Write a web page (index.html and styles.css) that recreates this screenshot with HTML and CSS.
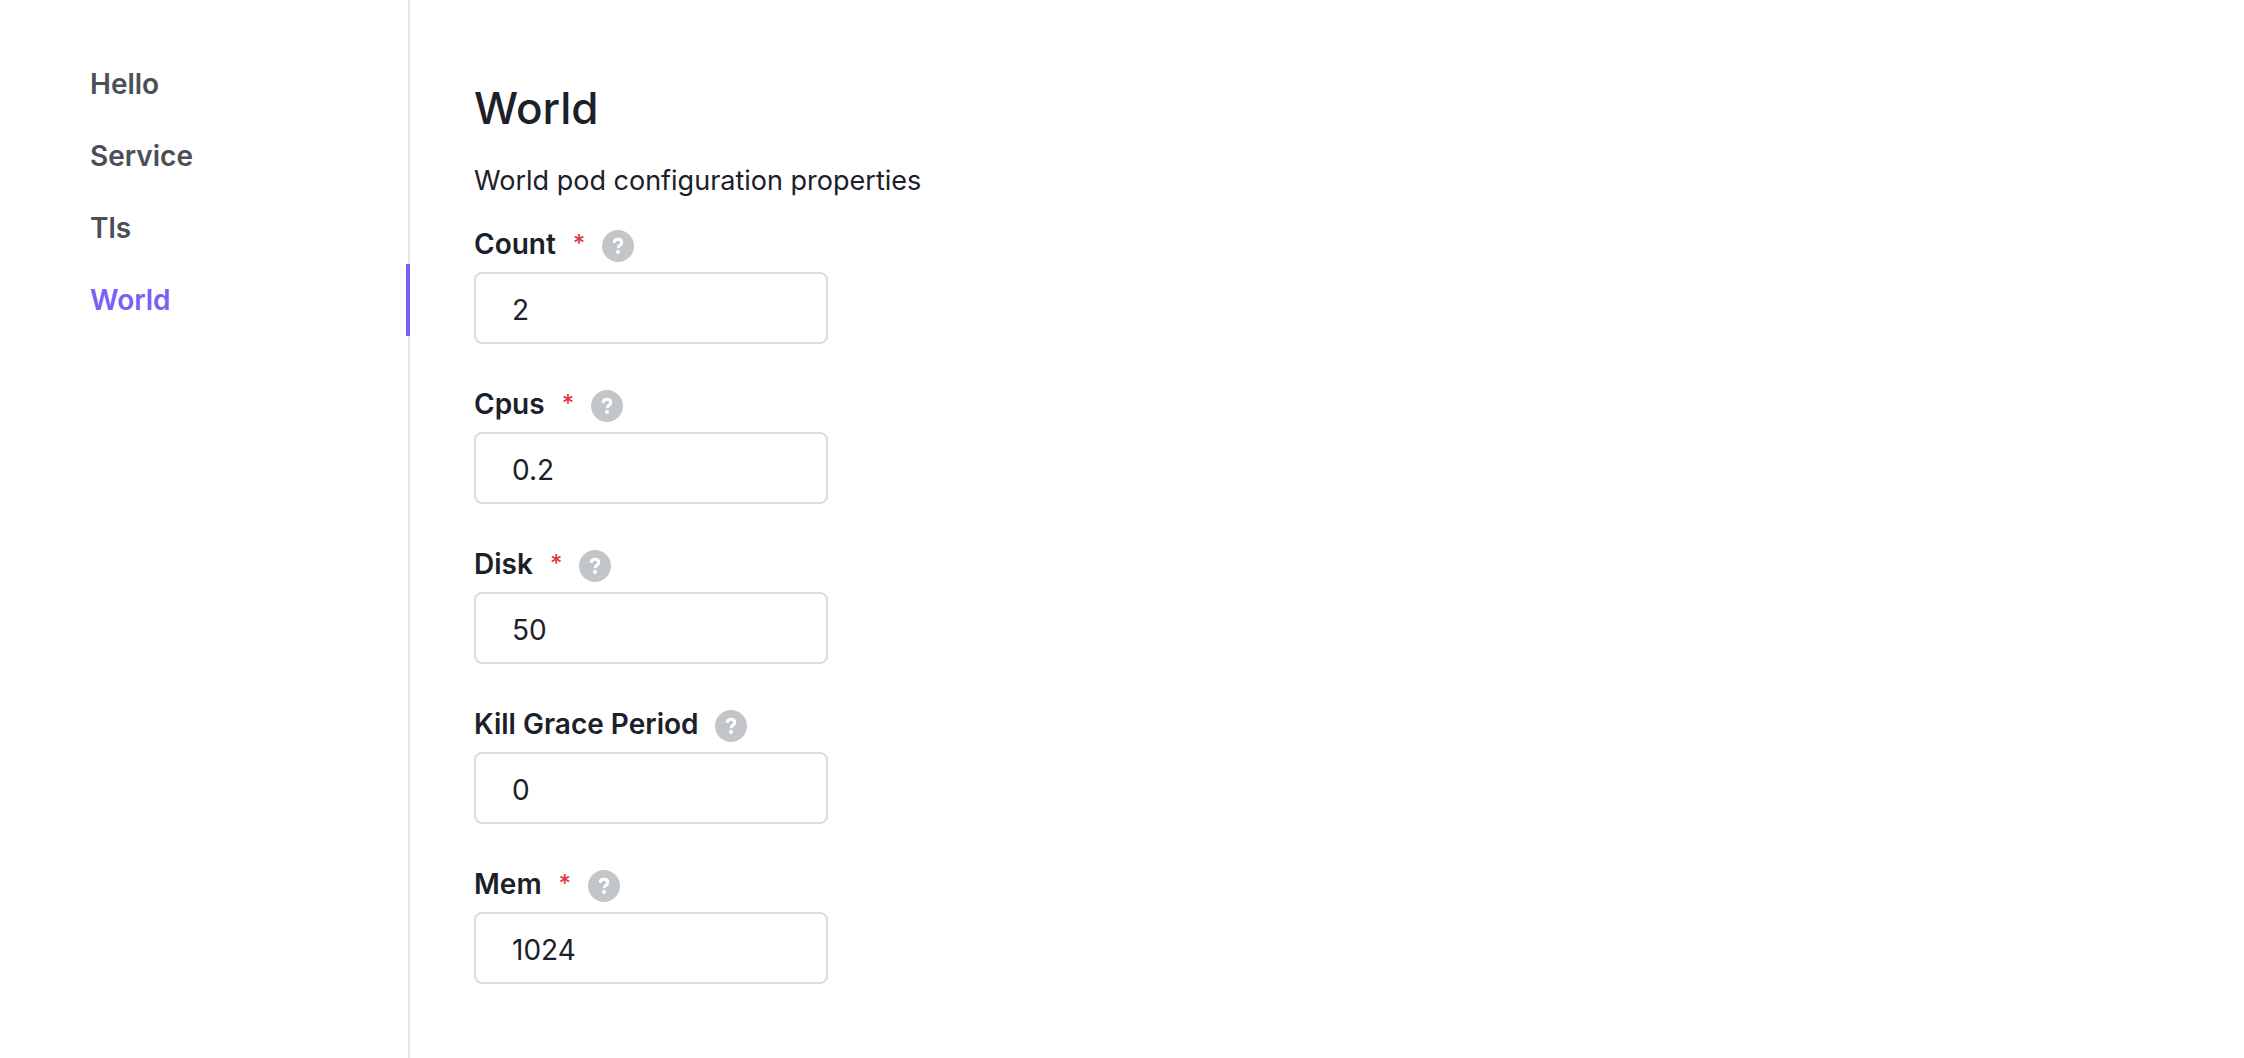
FILE: index.html
```html
<!DOCTYPE html>
<html lang="en">
<head>
<meta charset="utf-8">
<meta name="viewport" content="width=device-width, initial-scale=1">
<title>World</title>
<link rel="stylesheet" href="styles.css">
</head>
<body>
<svg class="sprite" aria-hidden="true">
  <symbol id="help-icon" viewBox="0 0 32 32">
    <circle cx="16" cy="16" r="16" fill="#c3c6c9"/>
    <path d="M12 12.800C12.200 10.400 13.800 9.300 16 9.300c2.200 0 3.800 1.200 3.800 3.100 0 1.400-.8 2.200-1.900 2.900-1.200.7-1.700 1.300-1.700 2.900" fill="none" stroke="#fff" stroke-width="2.900"/>
    <circle cx="16" cy="22" r="2.100" fill="#fff"/>
  </symbol>
</svg>
<div class="layout">
  <nav class="sidebar" aria-label="Sections">
    <a class="tab" href="#hello">Hello</a>
    <a class="tab" href="#service">Service</a>
    <a class="tab" href="#tls">Tls</a>
    <a class="tab tab-active" href="#world" aria-current="page">World</a>
  </nav>
  <main class="content">
    <h1 class="title">World</h1>
    <p class="description">World pod configuration properties</p>
    <form class="form">
      <div class="field">
        <div class="field-head">
          <label class="label" for="count">Count</label>
          <span class="required">*</span>
          <button class="help" type="button" aria-label="Help"><svg class="help-icon"><use href="#help-icon"/></svg></button>
        </div>
        <input class="input" id="count" type="text" value="2" required>
      </div>
      <div class="field">
        <div class="field-head">
          <label class="label" for="cpus">Cpus</label>
          <span class="required">*</span>
          <button class="help" type="button" aria-label="Help"><svg class="help-icon"><use href="#help-icon"/></svg></button>
        </div>
        <input class="input" id="cpus" type="text" value="0.2" required>
      </div>
      <div class="field">
        <div class="field-head">
          <label class="label" for="disk">Disk</label>
          <span class="required">*</span>
          <button class="help" type="button" aria-label="Help"><svg class="help-icon"><use href="#help-icon"/></svg></button>
        </div>
        <input class="input" id="disk" type="text" value="50" required>
      </div>
      <div class="field">
        <div class="field-head">
          <label class="label" for="kill">Kill Grace Period</label>
          <button class="help" type="button" aria-label="Help"><svg class="help-icon"><use href="#help-icon"/></svg></button>
        </div>
        <input class="input" id="kill" type="text" value="0">
      </div>
      <div class="field">
        <div class="field-head">
          <label class="label" for="mem">Mem</label>
          <span class="required">*</span>
          <button class="help" type="button" aria-label="Help"><svg class="help-icon"><use href="#help-icon"/></svg></button>
        </div>
        <input class="input" id="mem" type="text" value="1024" required>
      </div>
    </form>
  </main>
</div>
</body>
</html>
```
FILE: styles.css
```css
* {
  box-sizing: border-box;
}

body {
  margin: 0;
  background: #fff;
  color: #1b2029;
  font-family: Inter, "Liberation Sans", sans-serif;
  font-size: 28px;
}

.sprite {
  display: none;
}

.layout {
  display: flex;
  min-height: 100vh;
}

.sidebar {
  flex: 0 0 410px;
  padding-top: 48px;
  background: linear-gradient(#e5e5e5, #e5e5e5) right / 2px 100% no-repeat;
}

.tab {
  display: block;
  padding-left: 90px;
  border-right: 4px solid transparent;
  color: #4b4f58;
  font-weight: 600;
  line-height: 72px;
  text-decoration: none;
}

.tab-active {
  border-right-color: #7761f6;
  color: #7761f6;
}

.content {
  flex: 1;
  padding: 80px 64px 64px;
}

.title {
  margin: 0 0 25px;
  font-size: 44px;
  font-weight: 500;
  line-height: 56px;
}

.description {
  margin: 0 0 29px;
  font-size: 27px;
  line-height: 40px;
}

.form {
  display: grid;
  gap: 46px;
}

.field {
  display: grid;
  gap: 10px;
}

.field-head {
  display: flex;
  gap: 17px;
}

.label {
  font-weight: 600;
  line-height: 28px;
}

.required {
  color: #dc3b43;
  font-size: 24px;
  font-weight: 500;
  line-height: 28px;
}

.help {
  height: 32px;
  padding: 0;
  border: 0;
  background: none;
  cursor: pointer;
}

.help-icon {
  display: block;
  width: 32px;
  height: 32px;
}

.input {
  width: 354px;
  height: 72px;
  padding: 3px 36px 0;
  border: 2px solid #d9dce0;
  border-radius: 8px;
  background: #fff;
  color: inherit;
  font: inherit;
}
```
